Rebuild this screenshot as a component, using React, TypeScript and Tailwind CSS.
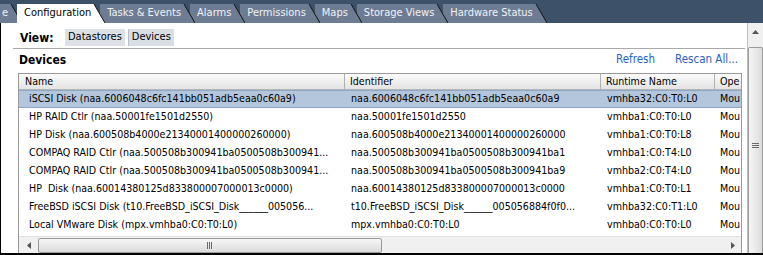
import React from "react";

const tabs = [
  { label: "e", z: "z-[9]", pl: "pl-[2px]" },
  { label: "Configuration", z: "z-[10]", pl: "pl-[7px]", active: true },
  { label: "Tasks & Events", z: "z-[7]", pl: "pl-[7px]" },
  { label: "Alarms", z: "z-[6]", pl: "pl-[7px]" },
  { label: "Permissions", z: "z-[5]", pl: "pl-[7px]" },
  { label: "Maps", z: "z-[4]", pl: "pl-[7px]" },
  { label: "Storage Views", z: "z-[3]", pl: "pl-[7px]" },
  { label: "Hardware Status", z: "z-[2]", pl: "pl-[7px]" },
];

const rows = [
  ["iSCSI Disk (naa.6006048c6fc141bb051adb5eaa0c60a9)", "naa.6006048c6fc141bb051adb5eaa0c60a9", "vmhba32:C0:T0:L0"],
  ["HP RAID Ctlr (naa.50001fe1501d2550)", "naa.50001fe1501d2550", "vmhba1:C0:T0:L0"],
  ["HP Disk (naa.600508b4000e21340001400000260000)", "naa.600508b4000e21340001400000260000", "vmhba1:C0:T0:L8"],
  ["COMPAQ RAID Ctlr (naa.500508b300941ba0500508b300941...", "naa.500508b300941ba0500508b300941ba1", "vmhba1:C0:T4:L0"],
  ["COMPAQ RAID Ctlr (naa.500508b300941ba0500508b300941...", "naa.500508b300941ba0500508b300941ba9", "vmhba2:C0:T4:L0"],
  ["HP  Disk (naa.60014380125d833800007000013c0000)", "naa.60014380125d833800007000013c0000", "vmhba1:C0:T0:L1"],
  ["FreeBSD iSCSI Disk (t10.FreeBSD_iSCSI_Disk______005056...", "t10.FreeBSD_iSCSI_Disk______005056884f0f0...", "vmhba32:C0:T1:L0"],
  ["Local VMware Disk (mpx.vmhba0:C0:T0:L0)", "mpx.vmhba0:C0:T0:L0", "vmhba0:C0:T0:L0"],
];

const Tab = ({ label, active, z, pl }: { label: string; active?: boolean; z: string; pl: string }) => {
  const fill = active ? "#ffffff" : "#6d7c93";
  return (
    <div className={`relative ${z} flex h-[19px] -mr-[5px]`}>
      <div
        className={`flex items-center ${pl} pr-[2px] ${active ? "bg-white text-black" : "bg-[#6d7c93] text-[#f1f3f7]"}`}
      >
        {label}
      </div>
      <svg width="12" height="19" viewBox="0 0 12 19">
        <polygon points="0,0 1,0 12,19 0,19" fill={fill} />
        <line x1="1" y1="0" x2="12" y2="19" stroke="#111" strokeWidth="1" />
      </svg>
    </div>
  );
};

const Grip = ({ vertical }: { vertical?: boolean }) =>
  vertical ? (
    <svg width="7" height="6" viewBox="0 0 7 6">
      <path d="M0 0.5H7M0 2.5H7M0 4.5H7" stroke="#6b6b6b" strokeWidth="1" />
    </svg>
  ) : (
    <svg width="6" height="7" viewBox="0 0 6 7">
      <path d="M0.5 0V7M2.5 0V7M4.5 0V7" stroke="#6b6b6b" strokeWidth="1" />
    </svg>
  );

export default function App() {
  return (
    <div className="w-[763px] h-[255px] overflow-hidden bg-white flex flex-col font-['DejaVu_Sans_Condensed','Liberation_Sans',sans-serif] text-[11px] text-black">
      {/* tab strip */}
      <div className="h-[23px] shrink-0 bg-[#3d5169] flex items-end">
        {tabs.map((t) => (
          <Tab key={t.label} {...t} />
        ))}
      </div>

      <div className="flex-1 flex min-h-0 border-l border-l-black border-b-2 border-b-black">
        {/* main panel */}
        <div className="flex-1 flex flex-col min-w-0">
          <div className="flex items-center h-[25px] pt-[4px] pl-[19px]">
            <span className="font-bold text-[12px] w-[45px]">View:</span>
            <span className="h-[17px] flex items-center px-[3px] bg-[#dde1e7]">Datastores</span>
            <span className="h-[17px] flex items-center px-[3px] ml-[3px] bg-[#d9dde4] border-l border-l-[#b8bec8]">
              Devices
            </span>
          </div>
          <div className="ml-[12px] mr-[2px] border-t border-t-[#a9a9a9]" />
          <div className="flex items-center h-[21px] pl-[18px] pr-[9px] pt-[1px]">
            <span className="font-bold text-[12px] flex-1">Devices</span>
            <span className="text-[#2a62c0] text-[11.5px]">Refresh</span>
            <span className="text-[#2a62c0] text-[11.5px] ml-[20px]">Rescan All...</span>
          </div>

          {/* device table */}
          <div className="ml-[17px] mr-[5px] mt-[3px] flex-1 flex flex-col border border-[#9a9a9a] border-b-0 min-h-0 overflow-hidden text-[10.6px]">
            <div className="flex h-[16px] shrink-0 bg-gradient-to-b from-[#fbfbfb] to-[#e4e4e4] border-b border-b-[#b5b5b5]">
              <div className="w-[326px] shrink-0 pl-[6px] flex items-center border-r border-r-[#b0b0b0]">Name</div>
              <div className="w-[256px] shrink-0 pl-[5px] flex items-center border-r border-r-[#b0b0b0]">Identifier</div>
              <div className="w-[114px] shrink-0 pl-[5px] flex items-center border-r border-r-[#b0b0b0]">Runtime Name</div>
              <div className="flex-1 pl-[5px] flex items-center whitespace-nowrap">Ope</div>
            </div>
            <div className="flex flex-col">
              {rows.map((r, i) => (
                <div
                  key={i}
                  className={`flex h-[18px] items-center whitespace-pre ${
                    i === 0 ? "bg-[#b4c6dc] border-y border-y-[#8fa7c6]" : "border-y border-y-transparent"
                  }`}
                >
                  <div className="w-[326px] shrink-0 pl-[10px] overflow-hidden">{r[0]}</div>
                  <div className="w-[256px] shrink-0 pl-[6px] overflow-hidden">{r[1]}</div>
                  <div className="w-[114px] shrink-0 pl-[6px] overflow-hidden">{r[2]}</div>
                  <div className="flex-1 pl-[5px]">Mou</div>
                </div>
              ))}
            </div>
            <div className="flex-1" />
            {/* horizontal scrollbar */}
            <div className="h-[17px] shrink-0 flex items-center bg-[#f0f0f0] border-t border-t-[#e2e2e2]">
              <div className="w-[19px] flex justify-center">
                <svg width="4" height="7" viewBox="0 0 4 7">
                  <polygon points="4,0 0,3.5 4,7" fill="#555" />
                </svg>
              </div>
              <div className="w-[344px] h-[15px] flex items-center justify-center rounded-[2px] border border-[#9b9b9b] bg-gradient-to-b from-[#f6f6f6] to-[#dcdcdc]">
                <Grip />
              </div>
              <div className="flex-1" />
              <div className="w-[17px] flex justify-center">
                <svg width="4" height="7" viewBox="0 0 4 7">
                  <polygon points="0,0 4,3.5 0,7" fill="#555" />
                </svg>
              </div>
            </div>
          </div>
        </div>

        {/* page scrollbar */}
        <div className="w-[16px] shrink-0 flex flex-col items-center bg-[#f0f0f0] border-l border-l-[#bdbdbd]">
          <div className="h-[18px] flex items-center justify-center">
            <svg width="7" height="4" viewBox="0 0 7 4">
              <polygon points="0,4 3.5,0 7,4" fill="#555" />
            </svg>
          </div>
          <div className="mt-[6px] w-[15px] flex-1 flex items-center justify-center pb-[10px] rounded-t-[2px] border border-b-0 border-[#9b9b9b] bg-gradient-to-r from-[#f6f6f6] to-[#dcdcdc]">
            <Grip vertical />
          </div>
        </div>
      </div>
    </div>
  );
}
